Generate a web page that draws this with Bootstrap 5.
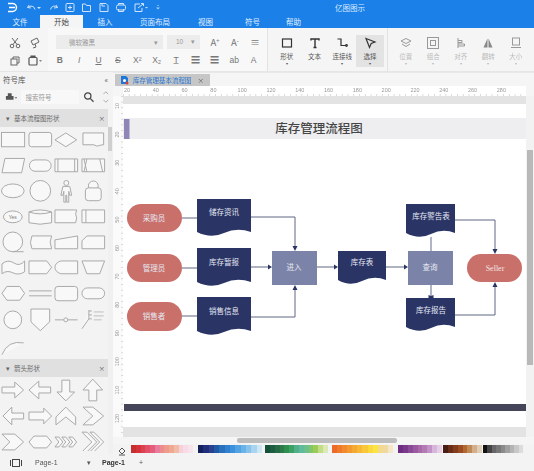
<!DOCTYPE html>
<html lang="zh">
<head>
<meta charset="UTF-8">
<title>亿图图示</title>
<link href="https://cdn.jsdelivr.net/npm/bootstrap@5.3.3/dist/css/bootstrap.min.css" rel="stylesheet">
<style>
  html, body { margin: 0; height: 471px; overflow: hidden; }
  body { font-family: "Noto Sans CJK SC", "Liberation Sans", sans-serif; background: #f5f5f5; color: #555; }
  .app-root { width: 534px; height: 471px; overflow: hidden; filter: blur(.4px); }
  .title-bar { height: 15px; background: #1b80e8; color: #d8ebff; position: relative; }
  .title-bar svg { display: block; }
  .app-name { position: absolute; left: 335px; top: 2px; font-size: 7.5px; line-height: 11px; }
  .tab-bar { height: 13px; background: #1b80e8; color: #e3f0ff; font-size: 7.5px; line-height: 13px; }
  .tab-bar > div { text-align: center; }
  .tab-on { background: #f5f5f5; color: #444; }
  .ribbon { height: 44px; background: #f5f5f5; border-bottom: 1px solid #e6e6e6; }
  .rib-clip { width: 48px; padding: 6px 0 0 5px; }
  .rib-font { width: 219px; padding: 7px 0 0 2px; background: #f8f8f8; }
  .rib-tools { width: 120px; padding: 7px 0 0 5px; border-left: 1px solid #e2e2e2; }
  .rib-arrange { width: 147px; padding: 7px 0 0 4px; border-left: 1px solid #e2e2e2; }
  .clip-cell { width: 20px; height: 18px; }
  .clip-cell svg { display: block; }
  .font-select { height: 14px; background: #ececec; color: #999; font-size: 6.5px; line-height: 14px; padding: 0 5px; }
  .font-name { width: 107px; margin-left: 6px; }
  .font-size { width: 33px; margin: 0 5px 0 4px; font-family: "Liberation Sans", sans-serif; }
  .fmt-cell { width: 20px; height: 14px; font-size: 9.5px; line-height: 14px; text-align: center; color: #777; }
  .fmt-cell sup { font-size: 6px; }
  .fmt-line { margin-top: 4px; }
  .fmt-line .fmt-cell { width: 19.4px; font-size: 8.5px; font-family: "Liberation Sans", sans-serif; }
  .tool-btn { width: 27.7px; height: 32px; font-size: 6.5px; line-height: 9px; text-align: center; color: #555; }
  .tool-btn svg { display: block; margin: 1px auto 2px; }
  .tool-on { background: #e3e3e3; }
  .tool-off { width: 27.5px; color: #bbb; }
  .caret-mini { font-size: 4px; line-height: 5px; display: block; }
  .side-panel { width: 113px; background: #f3f3f3; }
  .side-head { height: 15px; font-size: 7.5px; line-height: 15px; padding: 0 5px 0 3px; }
  .side-search { height: 20px; padding: 0 3px 0 4px; font-size: 6.5px; color: #999; }
  .search-box { width: 60px; margin-left: 4px; height: 14px; line-height: 14px; padding-left: 4px; background: #f8f8f8; }
  .sec-head { height: 18px; width: 108px; background: #e0e0e0; font-size: 6.5px; line-height: 18px; padding: 0 3px 0 6px; color: #666; }
  .sec-first { margin-top: 2px; }
  .sec-next { margin-top: 1px; }
  .shape-grid { display: grid; grid-template-columns: repeat(4, 26.6px); grid-auto-rows: 25.7px; }
  .shape-grid svg { display: block; width: 26.6px; height: 25.7px; }
  .arrow-grid { height: 74px; overflow: hidden; grid-auto-rows: 26px; }
  .arrow-grid svg { height: 26px; }
  .side-track { position: absolute; left: 108px; top: 55px; width: 5px; height: 327px; background: #f0f0f0; }
  .side-thumb { width: 4px; height: 24px; background: #cfcfcf; }
  .doc-tabs { height: 14px; padding: 1px 0 0 2px; border-top: 1px solid #e8e8e8; background: #f5f5f5; }
  .doc-tab { width: 95px; height: 12px; background: #c6c6c6; font-size: 6.5px; line-height: 12px; color: #2a76d2; padding-left: 5px; }
  .doc-tab-x { color: #666; margin-left: 6px; }
  .ruler-top { height: 10px; background: #fff; margin-left: 10px; width: 403px; }
  .ruler-left { width: 10px; background: #fafafa; }
  .ruler-top svg, .ruler-left svg { display: block; }
  .gray-band { background: #e3e3e3; }
  .band-top { height: 8px; }
  .band-bottom { height: 10px; }
  .page-sheet { display: block; }
  .v-track { width: 8px; background: #f2f2f2; }
  .v-thumb { width: 6px; height: 215px; margin: 54px 0 0 1px; background: #b9b9b9; }
  .h-track { height: 7px; background: #f5f5f5; padding-left: 124px; }
  .h-thumb { width: 160px; height: 5px; margin-top: 1px; border-radius: 2px; background: #bdbdbd; }
  .color-strip { height: 10px; background: #f3f3f3; }
  .fill-cell { width: 18px; }
  .swatch-group { height: 8px; }
  .swatch { height: 8px; }
  .page-bar { height: 17px; background: #f3f3f3; font-size: 7px; line-height: 17px; font-family: "Liberation Sans", sans-serif; color: #555; }
  .page-tab-b { font-weight: 700; color: #333; width: 33px; }
  .canvas-label { font-family: "Noto Sans CJK SC", sans-serif; font-size: 7.5px; fill: #e6e8f2; text-anchor: middle; }
  .canvas-title { font-family: "Noto Sans CJK SC", serif; font-size: 12.5px; font-weight: 500; fill: #444; text-anchor: middle; }
  .seller-label { font-family: "Liberation Serif", serif; font-size: 8px; fill: #f4e4e2; text-anchor: middle; }
  .wire { fill: none; stroke: #5f6684; stroke-width: 1; }
  .wire-soft { fill: none; stroke: #9da2bb; stroke-width: 1.6; }
  .arrow-tip { fill: #2a3566; }
</style>
</head>
<body>
<div class="app-root d-flex flex-column">
  <div class="title-bar d-flex flex-shrink-0">
    <svg width="25" height="15" viewBox="0 0 25 15" fill="none" stroke="#fff" stroke-width="1.5"><path d="M8 3.500h4.500a4 4 0 0 1 0 8H8M9 7.500h6"/></svg>
    <svg width="19" height="15" viewBox="0 0 19 15" fill="none" stroke="#cfe4fb"><path d="M4 5l-1.500 2.500L6 8M3 7.500a4 4 0 0 1 7 2"/><path d="M12 7l2 2 2-2" fill="#cfe4fb" stroke="none"/></svg>
    <svg width="17" height="15" viewBox="0 0 17 15" fill="none" stroke="#cfe4fb"><path d="M12 5l1.500 2.500L10 8M13.500 7.500a4 4 0 0 0-7 2"/></svg>
    <svg width="17" height="15" viewBox="0 0 17 15" fill="none" stroke="#cfe4fb"><rect x="5" y="3.500" width="8" height="8" rx="1"/><path d="M9 5.500v4M7 7.500h4"/></svg>
    <svg width="17" height="15" viewBox="0 0 17 15" fill="none" stroke="#cfe4fb"><path d="M4.500 4h3l1 1.500h4v6h-8z"/></svg>
    <svg width="17" height="15" viewBox="0 0 17 15" fill="none" stroke="#cfe4fb"><path d="M5 3.500h6l2 2v6H5zM7 3.500v2.500h3"/></svg>
    <svg width="18" height="15" viewBox="0 0 18 15" fill="none" stroke="#cfe4fb"><rect x="4.500" y="5" width="9" height="5" rx="1.500"/><path d="M6.500 5V3.500h5V5M6.500 9v2.500h5V9"/></svg>
    <svg width="20" height="15" viewBox="0 0 20 15" fill="none" stroke="#cfe4fb"><path d="M10 4H5v7.500h7V8M8 8l5-4M11 3.500h2.500V6"/><path d="M15 7l1.500 1.500L18 7" fill="#cfe4fb" stroke="none"/></svg>
    <svg class="ms-1" width="8" height="15" viewBox="0 0 8 15" fill="#a9d0f7"><circle cx="4" cy="5.500" r=".7"/><path d="M2 7.500h4l-2 2z"/></svg>
    <span class="app-name">亿图图示</span>
  </div>
  <div class="tab-bar d-flex flex-shrink-0">
    <div style="width:40px">文件</div>
    <div class="tab-on" style="width:43px">开始</div>
    <div style="width:44px">插入</div>
    <div style="width:56px">页面布局</div>
    <div style="width:45px">视图</div>
    <div style="width:49px">符号</div>
    <div style="width:33px">帮助</div>
  </div>
  <div class="ribbon d-flex flex-shrink-0">
    <div class="rib-clip">
      <div class="d-flex">
        <div class="clip-cell"><svg width="20" height="18" viewBox="0 0 20 18" fill="none" stroke="#666"><circle cx="7" cy="12" r="1.800"/><circle cx="13" cy="12" r="1.800"/><path d="M8 10.500L13 4M12 10.500L7 4"/></svg></div>
        <div class="clip-cell"><svg width="20" height="18" viewBox="0 0 20 18" fill="none" stroke="#666"><path d="M6 7l6-3 2 4-6 3zM10 10l1 3-3 1"/></svg></div>
      </div>
      <div class="d-flex">
        <div class="clip-cell"><svg width="20" height="18" viewBox="0 0 20 18" fill="none" stroke="#666"><rect x="6" y="7" width="6" height="6"/><path d="M8 7V5h6v6h-2"/></svg></div>
        <div class="clip-cell"><svg width="20" height="18" viewBox="0 0 20 18" fill="none" stroke="#555" stroke-width="1.200"><rect x="4" y="5.500" width="8" height="7.500" rx="1"/><path d="M6 5.500V4h4v1.500" fill="#555"/><path d="M14 8h3l-1.500 2z" fill="#888" stroke="none"/></svg></div>
      </div>
    </div>
    <div class="rib-font">
      <div class="d-flex">
        <div class="font-select font-name d-flex justify-content-between"><span class="ms-2">微软雅黑</span><span>▾</span></div>
        <div class="font-select font-size d-flex justify-content-between"><span class="ms-1">10</span><span>▾</span></div>
        <div class="fmt-cell">A<sup>+</sup></div>
        <div class="fmt-cell">A<sup>-</sup></div>
        <div class="fmt-cell">≡</div>
      </div>
      <div class="d-flex fmt-line">
        <div class="fmt-cell fw-bold">B</div>
        <div class="fmt-cell fst-italic">I</div>
        <div class="fmt-cell text-decoration-underline">U</div>
        <div class="fmt-cell text-decoration-line-through">S</div>
        <div class="fmt-cell">X²</div>
        <div class="fmt-cell">X₂</div>
        <div class="fmt-cell">T̲</div>
        <div class="fmt-cell">☰</div>
        <div class="fmt-cell">☰</div>
        <div class="fmt-cell">ab</div>
        <div class="fmt-cell">A</div>
      </div>
    </div>
    <div class="rib-tools d-flex">
      <div class="tool-btn"><svg width="14" height="14" viewBox="0 0 14 14" fill="none" stroke="#333" stroke-width="1.200"><rect x="2.500" y="3" width="9" height="8"/></svg>形状<span class="caret-mini">▾</span></div>
      <div class="tool-btn"><svg width="14" height="14" viewBox="0 0 14 14" fill="none" stroke="#333" stroke-width="1.400"><path d="M3 4.500V3h8v1.500M7 3v8.500M5.500 11.500h3"/></svg>文本</div>
      <div class="tool-btn"><svg width="14" height="14" viewBox="0 0 14 14" fill="none" stroke="#333" stroke-width="1.200"><path d="M2.500 3H6v6.500h5"/><circle cx="11.500" cy="9.500" r=".8"/></svg>连接线<span class="caret-mini">▾</span></div>
      <div class="tool-btn tool-on"><svg width="14" height="14" viewBox="0 0 14 14" fill="none" stroke="#333" stroke-width="1.200"><path d="M3 2.500l9 3.500-3.800 1.500L6.500 11.500z"/></svg>选择<span class="caret-mini">▾</span></div>
    </div>
    <div class="rib-arrange d-flex">
      <div class="tool-btn tool-off"><svg width="14" height="14" viewBox="0 0 14 14" fill="none" stroke="#999"><path d="M7 2.500l5 2.500-5 2.500L2 5zM3 8l4 2.500L11 8"/></svg>位置<span class="caret-mini">▾</span></div>
      <div class="tool-btn tool-off"><svg width="14" height="14" viewBox="0 0 14 14" fill="none" stroke="#999"><rect x="1.500" y="1.500" width="11" height="11"/><rect x="4.500" y="4.500" width="5" height="5"/></svg>组合<span class="caret-mini">▾</span></div>
      <div class="tool-btn tool-off"><svg width="14" height="14" viewBox="0 0 14 14" fill="none" stroke="#999"><path d="M4 2v10M4 4.500h4v2H4M4 8h6.500v2H4"/></svg>对齐<span class="caret-mini">▾</span></div>
      <div class="tool-btn tool-off"><svg width="14" height="14" viewBox="0 0 14 14" fill="#888"><path d="M6.500 2.500v9H2.500zM7.500 2.500v9h4z"/></svg>翻转<span class="caret-mini">▾</span></div>
      <div class="tool-btn tool-off"><svg width="14" height="14" viewBox="0 0 14 14" fill="none" stroke="#999"><rect x="3.500" y="2" width="7" height="7"/><path d="M2 11.500h10"/></svg>大小<span class="caret-mini">▾</span></div>
    </div>
  </div>

  <div class="d-flex flex-grow-1 position-relative" style="min-height:0">
    <div class="side-panel flex-shrink-0">
      <div class="side-head d-flex justify-content-between"><span>符号库</span><span>«</span></div>
      <div class="side-search d-flex align-items-center">
        <svg width="14" height="12" viewBox="0 0 14 12" fill="#555"><path d="M2 5h8v4H2zM4 2h4v3H4z"/><path d="M11 6h3l-1.500 2z" fill="#888"/></svg>
        <div class="search-box">搜索符号</div>
        <svg class="ms-1" width="12" height="12" viewBox="0 0 12 12" fill="none" stroke="#444" stroke-width="1.300"><circle cx="5" cy="5" r="3.300"/><path d="M7.500 7.500L11 11"/></svg>
        <svg class="ms-2" width="8" height="14" viewBox="0 0 8 14" fill="none" stroke="#aaa"><path d="M1.500 4L4 1.500 6.500 4M1.500 10L4 12.500 6.500 10"/></svg>
      </div>
      <div class="sec-head sec-first d-flex justify-content-between"><span><span class="me-1">▾</span>基本流程图形状</span><span>×</span></div>
      <div class="shape-grid" id="basicShapes"></div>
      <div class="sec-head sec-next d-flex justify-content-between"><span><span class="me-1">▾</span>箭头形状</span><span>×</span></div>
      <div class="shape-grid arrow-grid" id="arrowShapes"></div>
      <div class="side-track"><div class="side-thumb"></div></div>
    </div>

    <div class="flex-grow-1 d-flex flex-column" style="min-width:0">
      <div class="doc-tabs d-flex flex-shrink-0">
        <div class="doc-tab d-flex align-items-center">
          <svg class="me-1" width="9" height="10" viewBox="0 0 9 10"><path d="M1 1h5l2 2v6H1z" fill="#1f78d8"/><circle cx="4.500" cy="5.500" r="1.500" fill="#fff"/><circle cx="7" cy="8" r="1.500" fill="#d8413a"/></svg>
          <span>库存管理基本流程图</span><span class="doc-tab-x">×</span>
        </div>
      </div>
      <div class="ruler-top flex-shrink-0" id="rulerTop"></div>
      <div class="d-flex flex-grow-1" style="min-height:0">
        <div class="ruler-left flex-shrink-0" id="rulerLeft"></div>
        <div class="flex-shrink-0" style="width:403px">
          <div class="gray-band band-top"></div>
          <svg class="page-sheet" width="403" height="323" viewBox="123 104 403 323">
            <rect x="123" y="104" width="403" height="323" fill="#fff"/>
            <rect x="123" y="118" width="403" height="21" fill="#eeeef0"/>
            <rect x="124" y="119" width="5.500" height="20" fill="#8f86b5"/>
            <text class="canvas-title" x="319" y="133">库存管理流程图</text>
            <rect x="124" y="404" width="402" height="7" fill="#45455a"/>

            <path class="wire" d="M182 218h15M182 268h15M182 316h15"/>
            <path class="wire" d="M251 217h44v30M251 267h17M251 317h44v-28M317 267h17M386 267h18"/>
            <path class="wire-soft" d="M431 251v-14M431 285v13"/>
            <path class="wire" d="M455 220h40v30M455 315h40v-29"/>
            <path class="arrow-tip" d="M292.500 246h5l-2.500 5zM268 264.500v5l4-2.500zM292.500 290h5l-2.500-5zM334 264.500v5l4-2.500zM404 264.500v5l4-2.500zM428.500 295v3h5v-3l-2.500 1zM492.500 249h5l-2.500 5zM492.500 287h5l-2.500-5z"/>

            <g fill="#c9706b">
              <rect x="127" y="204" width="55" height="28" rx="14"/>
              <rect x="127" y="254" width="55" height="28" rx="14"/>
              <rect x="127" y="302" width="55" height="29" rx="14.500"/>
              <rect x="467" y="254" width="55" height="28" rx="14"/>
            </g>
            <g fill="#2a3566">
              <path d="M197 199h54v33q-14-5-27 1t-27-1z"/>
              <path d="M197 248h54v34q-14-5-27 1t-27-1z"/>
              <path d="M197 297h54v34q-14-5-27 1t-27-1z"/>
              <path d="M338 251h48v29q-12-5-24 1t-24-1z"/>
              <path d="M406 204h49v29q-12-5-24 1t-25-1z"/>
              <path d="M406 298h49v29q-12-5-24 1t-25-1z"/>
            </g>
            <rect x="272" y="251" width="45" height="34" fill="#7c83a8"/>
            <rect x="408" y="251" width="45" height="34" fill="#7c83a8"/>

            <text class="canvas-label" x="154" y="221">采购员</text>
            <text class="canvas-label" x="154" y="271">管理员</text>
            <text class="canvas-label" x="154" y="319">销售者</text>
            <text class="canvas-label" x="224" y="215">储存资讯</text>
            <text class="canvas-label" x="224" y="265">库存暂报</text>
            <text class="canvas-label" x="224" y="314">销售信息</text>
            <text class="canvas-label" x="294" y="270">进入</text>
            <text class="canvas-label" x="362" y="265">库存表</text>
            <text class="canvas-label" x="430" y="270">查询</text>
            <text class="canvas-label" x="431" y="219">库存警告表</text>
            <text class="canvas-label" x="431" y="313">库存报告</text>
            <text class="seller-label" x="495" y="271">Seller</text>
          </svg>
          <div class="gray-band band-bottom"></div>
        </div>
        <div class="v-track flex-shrink-0"><div class="v-thumb"></div></div>
      </div>
      <div class="h-track flex-shrink-0"><div class="h-thumb"></div></div>
      <div class="color-strip d-flex align-items-center flex-shrink-0" id="colorStrip">
        <div class="fill-cell text-center"><svg width="10" height="9" viewBox="0 0 10 9" fill="none" stroke="#555"><path d="M5 1l3 3-3 3-3-3z"/><path d="M2 8h6"/></svg></div>
      </div>
    </div>
  </div>

  <div class="page-bar d-flex align-items-center flex-shrink-0">
    <div class="d-flex" style="width:30px;padding-left:10px"><svg width="12" height="10" viewBox="0 0 12 10" fill="none" stroke="#444"><rect x="2.500" y="1.500" width="7" height="7"/><path d="M.5 2v6M11.500 2v6"/></svg></div>
    <div style="width:57px;padding-left:5px">Page-1</div>
    <div style="width:15px">▾</div>
    <div class="page-tab-b">Page-1</div>
    <div class="ms-1">+</div>
  </div>
</div>

<script>
  // palette groups, left to right: start x inside the strip row, width, colours
  const palette = [
    [131, 62, ["#c62f2f","#d5333c","#dd4150","#e14f68","#e55d7a","#e77c9c","#ec8c8c","#ee9a8c","#f0a890","#f2bba6","#f5cfd9","#f7dbe6","#f6e4ec"]],
    [198, 64, ["#14205c","#1f2f7c","#2a3f8d","#1d5ba6","#2a6fbb","#2f80cf","#3d91dc","#52a3e3","#6ab3e8","#86c3ec","#a8d4f0","#cde6f6"]],
    [265, 63, ["#17503a","#1e5c40","#256b45","#2a7a4a","#2f8f4f","#3aa063","#4fb08a","#5fbb9a","#6cc08c","#83c56a","#9bcc55","#c3dc88","#dbe9b4"]],
    [332, 61, ["#ec6a2a","#ef7b2a","#f08a2d","#f29a30","#f4a933","#f6b835","#f8c838","#fbd93c","#fde445","#f3d98a","#f0d9a0","#f5e6c8"]],
    [398, 44, ["#6f2c80","#7a3a8c","#8a4a98","#9a5a9f","#a86aa8","#b47ab4","#c392c6","#d6b6da","#e4cfe6"]],
    [443, 39, ["#4a1d12","#6a2d18","#843c1e","#9a4c22","#b0682e","#c08a58","#d4ae88","#e0cdb8"]],
    [483, 40, ["#111","#444","#666","#777","#8a8a8a","#a0a0a0","#b4b4b4","#c8c8c8","#dcdcdc"]]
  ];
  const strip = document.getElementById("colorStrip");
  let stripX = 131;
  palette.forEach(([startX, width, colors]) => {
    const g = document.createElement("div");
    g.className = "swatch-group d-flex flex-shrink-0";
    g.style.width = width + "px";
    g.style.marginLeft = (startX - stripX) + "px";
    colors.forEach(color => {
      const s = document.createElement("div");
      s.className = "swatch flex-fill";
      s.style.background = color;
      g.appendChild(s);
    });
    strip.appendChild(g);
    stripX = startX + width;
  });

  // left panel shapes, 26.6 x 25.7 cell
  const basic = [
    '<rect x="1.500" y="5.500" width="23.500" height="14.500"/>',
    '<rect x="2" y="5.500" width="23" height="14.500" rx="2.500"/>',
    '<path d="M2 13l11-7 11 7-11 7z"/>',
    '<path d="M3 6h21v12q-3 0-5 1t-5-1H3z"/>',
    '<path d="M5 5.500h20l-3 14.500H2z"/>',
    '<rect x="2.500" y="7" width="22" height="11.500" rx="5.700"/>',
    '<path d="M2 6h23v13H2zM5 6v13M22 6v13"/>',
    '<path d="M2 6h23v13H2zM4 6l3 13M7 6l-3 13M20 6l3 13"/>',
    '<ellipse cx="13" cy="13" rx="11.500" ry="7"/>',
    '<circle cx="13.500" cy="13" r="10.500"/>',
    '<path d="M13.500 2.500a2.500 2.500 0 0 1 0 5 2.500 2.500 0 0 1 0-5zM10 8.500h7l2 9h-2l-1-4v11h-2v-7h-1v7h-2v-11l-1 4H8z"/>',
    '<circle cx="13.500" cy="8" r="5"/><rect x="5.500" y="10" width="16" height="13" rx="3"/>',
    '<ellipse cx="13" cy="13" rx="9.500" ry="6"/><text x="13" y="15" font-size="5" text-anchor="middle" fill="#777" stroke="none" font-family="Liberation Sans">Yes</text>',
    '<path d="M2 8q11-4 23 0v11q-12 3-23 0zM2 8q11 4 23 0"/>',
    '<path d="M2 6h22l-1 4 1 4-1 5H2z"/>',
    '<path d="M2 6h23v13H2zM6 6v13"/>',
    '<circle cx="13" cy="12" r="10"/><path d="M13 22h11"/>',
    '<path d="M5 6h20q-3 6 0 13H5q-3-6 0-13z"/>',
    '<path d="M2 10l23-4v13H2z"/>',
    '<path d="M7 6h18v13H2V11z"/>',
    '<path d="M2 9q6-5 12-1t11-2v11q-6 4-12 1t-11 1z"/>',
    '<path d="M2 6h18l5 6.500L20 19H2z"/>',
    '<path d="M8 6h17v13H8q-6-2-6-6.500T8 6z"/>',
    '<path d="M2 6h23l-5 13H7z"/>',
    '<path d="M7 5.500h13l5 7-5 7H7l-5-7z"/>',
    '<path d="M2 10h23M2 15h23"/>',
    '<rect x="2" y="5.500" width="23" height="14.500" rx="3"/>',
    '<rect x="2" y="7" width="23" height="11" rx="5.500"/>',
    '<circle cx="13" cy="13" r="9"/>',
    '<path d="M4 2h19v13l-9.500 9L4 15z"/>',
    '<path d="M2 13h23"/><circle cx="13" cy="13" r="2"/>',
    '<path d="M2 22l7-10v-9M9 4h3M9 8h3M9 12h3"/><path d="M14 5h10M14 9h10M14 13h8" stroke-width=".7"/>',
    '<path d="M2 22q6-15 22-12"/>'
  ];
  const arrows = [
    '<path d="M2 10h13V5l9 8-9 8v-5H2z"/>',
    '<path d="M24 10H12V4l-10 9 10 9v-6h12z"/>',
    '<path d="M9 3h8v12h5l-9 9-9-9h5z"/>',
    '<path d="M13 2l10 11h-6v11H9V13H3z"/>',
    '<path d="M24 10H12V4l-9 9 9 9v-6h12"/><path d="M24 10v6"/>',
    '<path d="M2 9h15V5l8 8-8 8v-4H2z"/>',
    '<path d="M13 4l10 10v8l-10-8-10 8v-8z"/>',
    '<path d="M3 4h10l11 9-11 9H3l10-9z"/>',
    '<path d="M2 5h13l9 8-9 8H2l8-8z"/>',
    '<path d="M7 7h13l5 6-5 6H7l-5-6z"/>',
    '<path d="M2 8h4l4 5-4 5H2l4-5zM9 8h4l4 5-4 5H9l4-5zM16 8h4l4 5-4 5h-4l4-5z"/>',
    '<path d="M2 3l10 10L2 23h5l10-10L7 3zM10 3l10 10-10 10h4l10-10L14 3z"/>'
  ];
  function fillShapes(id, list) {
    const box = document.getElementById(id);
    box.innerHTML = list.map(p =>
      `<svg viewBox="0 0 27 26" fill="#f8f8f8" stroke="#a9a9a9" stroke-width="1">${p}</svg>`
    ).join("");
  }
  fillShapes("basicShapes", basic);
  fillShapes("arrowShapes", arrows);

  // rulers
  let top_ = '<svg width="403" height="10" viewBox="123 0 403 10" fill="#999" font-size="5.500" font-family="Liberation Sans">';
  for (let i = 0; i < 14; i++) {
    const x = 127 + i * 28.8;
    top_ += `<text x="${x}" y="6" text-anchor="middle">${(i + 1) * 20}</text>`;
  }
  for (let x = 123; x < 526; x += 5.76) {
    top_ += `<rect x="${x}" y="8" width=".7" height="2" fill="#ccc"/>`;
  }
  document.getElementById("rulerTop").innerHTML = top_ + "</svg>";

  let left_ = '<svg width="10" height="358" viewBox="0 0 10 358" fill="#999" font-size="5.500" font-family="Liberation Sans">';
  [10, 20, 30, 40, 50, 60, 70, 80, 90, 100, 110, 120].forEach((v, i) => {
    const y = 10 + i * 28.4;
    left_ += `<text transform="translate(6 ${y}) rotate(-90)" text-anchor="middle">${v}</text>`;
  });
  for (let y = 0; y < 358; y += 5.7) {
    left_ += `<rect x="8" y="${y}" width="2" height=".7" fill="#ccc"/>`;
  }
  document.getElementById("rulerLeft").innerHTML = left_ + "</svg>";
</script>
<script src="https://cdn.jsdelivr.net/npm/bootstrap@5.3.3/dist/js/bootstrap.bundle.min.js"></script>
</body>
</html>
